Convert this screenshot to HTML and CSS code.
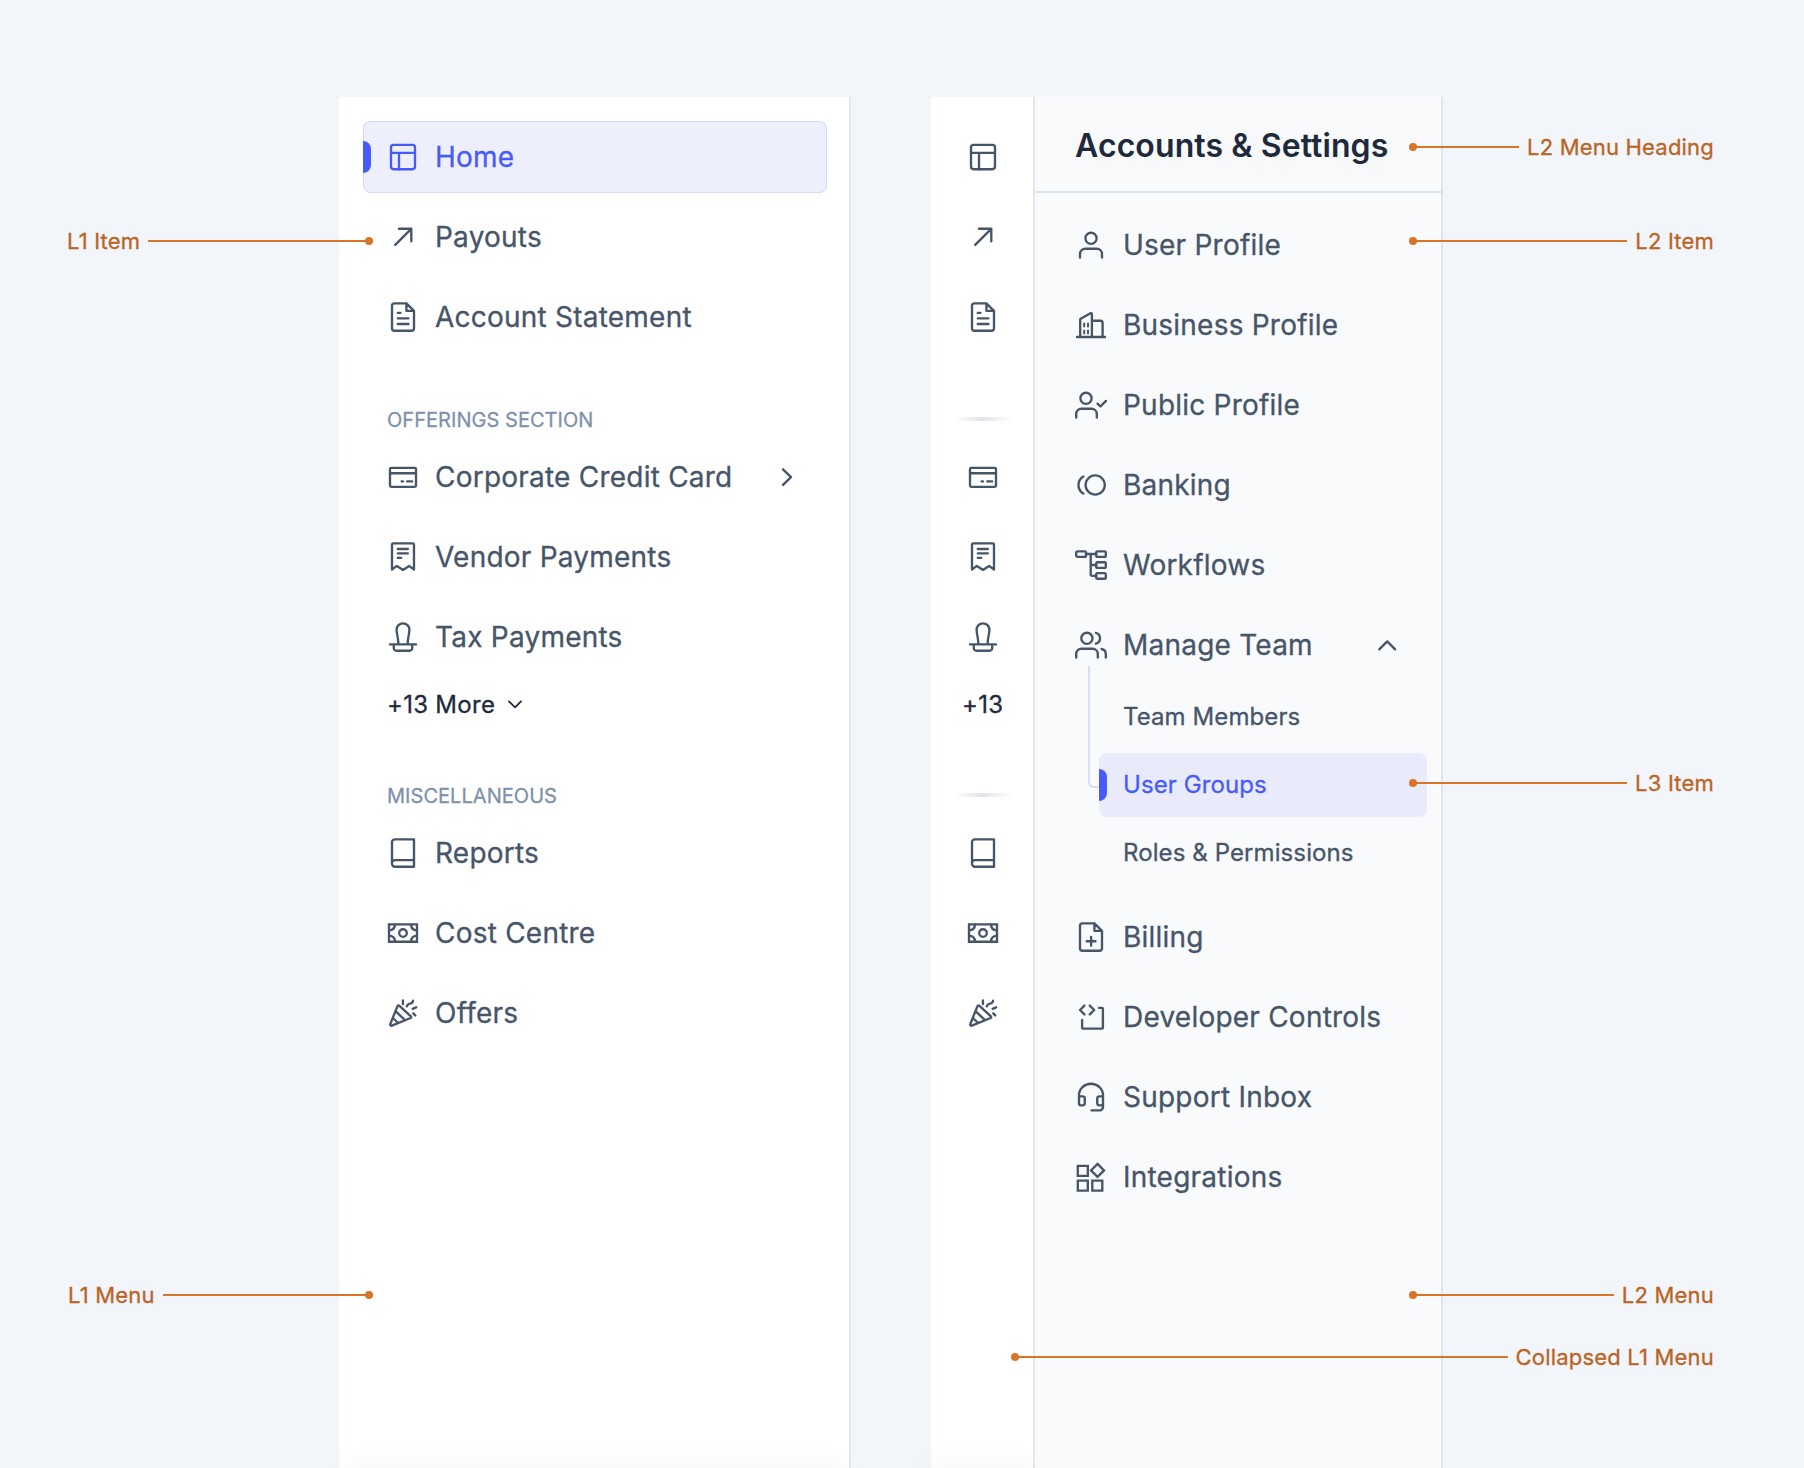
FILE: index.html
```html
<!DOCTYPE html>
<html lang="en">
<head>
<meta charset="utf-8">
<title>Navigation menu anatomy</title>
<link rel="stylesheet" href="styles.css">
</head>
<body>
<svg class="sprite" aria-hidden="true">
  <symbol id="home" viewBox="0 0 32 32"><rect x="4" y="3.8" width="24" height="24.4" rx="2.6"/><path d="M4 11.8h24M12 11.8v16.4"/></symbol>
  <symbol id="arrow" viewBox="0 0 32 32"><path d="M8.2 23.8 24.2 7.8M12 7.7h12.3v12.5"/></symbol>
  <symbol id="file" viewBox="0 0 32 32"><path d="M19.4 2.3H7.5A2.5 2.5 0 0 0 5 4.8v22.4a2.5 2.5 0 0 0 2.5 2.5h17a2.5 2.5 0 0 0 2.5-2.5V9.8L19.4 2.3v7.5H27M10.8 11.8h2.6M10.8 17.3h10.6M10.8 23h10.6"/></symbol>
  <symbol id="card" viewBox="0 0 32 32"><rect x="3" y="6.8" width="26" height="19" rx="1.2"/><path d="M3 12.2h26M14.7 20.4h1.2M20.3 20.4h4.8"/></symbol>
  <symbol id="receipt" viewBox="0 0 32 32"><path d="M5 28.5V3.7a1.4 1.4 0 0 1 1.4-1.4h19.2A1.4 1.4 0 0 1 27 3.7v24.8l-4.9-3.6-6.1 4-6.1-4zM10.8 8h10M10.8 12.3h10M10.8 16.8h3.4"/></symbol>
  <symbol id="stamp" viewBox="0 0 32 32"><path d="M3 23.4h26M6.8 23.4v3.8a2.5 2.5 0 0 0 2.5 2.5h13.4a2.5 2.5 0 0 0 2.5-2.5v-3.8M11.4 23.2C11.4 17 9.6 13 9.6 8.7a6.4 6.4 0 0 1 12.8 0c0 4.3-1.8 8.3-1.8 14.5"/></symbol>
  <symbol id="book" viewBox="0 0 32 32"><path d="M27 2.3H8a3 3 0 0 0-3 3v21.4a3 3 0 0 0 3 3h19zM5 26a3 3 0 0 1 3-2.9h19"/></symbol>
  <symbol id="cash" viewBox="0 0 32 32"><path stroke-linejoin="miter" d="M2 7.3h28v17.4H2z"/><circle cx="16" cy="16" r="3.8"/><path d="M8 7.6c-.2 3.2-2.3 5.4-5.7 5.7M24 7.6c.2 3.2 2.3 5.4 5.7 5.7M8 24.4c-.2-3.2-2.3-5.4-5.7-5.7M24 24.4c.2-3.2 2.3-5.4 5.7-5.7"/></symbol>
  <symbol id="party" viewBox="0 0 32 32"><path d="M10.6 8.9 3.3 27a1.2 1.2 0 0 0 1.6 1.6L23.6 21a1 1 0 0 0 .3-1.6L12.2 8.6a1 1 0 0 0-1.6.3zM8.6 14.2l9.4 9M5.8 21l5.4 5M15.9 3.5V7M19.8 9.4c.7-2.3 1.8-2.6 3.2-2.8 1.8-.2 2.9-.8 3-2.9M25.6 11.8l3.6-1.5M26.3 16.4l1.9 2"/></symbol>
  <symbol id="user" viewBox="0 0 32 32"><circle cx="16" cy="9.3" r="5.6"/><path d="M5 28.5v-3.6a5.2 5.2 0 0 1 5.2-5.2h11.6a5.2 5.2 0 0 1 5.2 5.2v3.6"/></symbol>
  <symbol id="building" viewBox="0 0 32 32"><path d="M2 28h28M5.2 28V10.6a1 1 0 0 1 .5-.9l9.7-5.5a1 1 0 0 1 1.5.9V28M16.9 11.7h8.4a2.3 2.3 0 0 1 2.3 2.3v14"/><path stroke-linecap="butt" stroke-width="2" d="M9.2 13.8v4.4M13 13.8v4.4M9.2 20.8v4.4M13 20.8v4.4"/></symbol>
  <symbol id="user-check" viewBox="0 0 32 32"><circle cx="11" cy="9.3" r="5.6"/><path d="M1.2 28.5v-3.6a5.2 5.2 0 0 1 5.2-5.2h10.2a5.2 5.2 0 0 1 5.2 5.2v3.6M22.6 14.7l2.8 2.8 5.6-5.6"/></symbol>
  <symbol id="coins" viewBox="0 0 32 32"><circle cx="20.2" cy="16" r="9.6"/><path d="M8.4 7.4a10 10 0 0 0 0 17.2"/></symbol>
  <symbol id="tree" viewBox="0 0 32 32"><rect x="1.2" y="2.3" width="9.8" height="5.6" rx="1.4"/><rect x="21.2" y="2.3" width="9.6" height="5.6" rx="1.4"/><rect x="21.2" y="13.2" width="9.6" height="5.6" rx="1.4"/><rect x="21.2" y="24.1" width="9.6" height="5.6" rx="1.4"/><path d="M11 5h10.2M15.7 5v20.5a1.4 1.4 0 0 0 1.4 1.4h4.1M15.7 16h5.5"/></symbol>
  <symbol id="users" viewBox="0 0 32 32"><circle cx="11.9" cy="9.3" r="5.6"/><path d="M1.2 28.5v-3.6a5.2 5.2 0 0 1 5.2-5.2h11.2a5.2 5.2 0 0 1 5.2 5.2v3.6M20.9 3.9a5.6 5.6 0 0 1 0 10.8M26.6 20a5.2 5.2 0 0 1 4.2 5v3.5"/></symbol>
  <symbol id="file-plus" viewBox="0 0 32 32"><path d="M19.4 2.3H7.5A2.5 2.5 0 0 0 5 4.8v22.4a2.5 2.5 0 0 0 2.5 2.5h17a2.5 2.5 0 0 0 2.5-2.5V9.8L19.4 2.3v7.5H27M11.7 20.2h8.8M16.1 15.8v8.8"/></symbol>
  <symbol id="code" viewBox="0 0 32 32"><path d="M9.4 4.6 5 9l4.4 4.4M14.8 4.6 19.2 9l-4.4 4.4M24 6.8h3a.9.9 0 0 1 .9.9v19a.9.9 0 0 1-.9.9H8a.9.9 0 0 1-.9-.9V19"/></symbol>
  <symbol id="headset" viewBox="0 0 32 32"><path d="M4 16.3v-2.2a12 11.4 0 0 1 24 0v12a3.2 3.2 0 0 1-3.2 3.2h-8.3M4 15.3h3.6a2.2 2.2 0 0 1 2.2 2.2v4.6a2.2 2.2 0 0 1-2.2 2.2H6a2 2 0 0 1-2-2zM28 15.3h-3.6a2.2 2.2 0 0 0-2.2 2.2v4.6a2.2 2.2 0 0 0 2.2 2.2H26a2 2 0 0 0 2-2z"/></symbol>
  <symbol id="grid" viewBox="0 0 32 32"><path stroke-linejoin="miter" d="M2.8 4.8h10v10h-10zM2.8 19.6h10v10h-10zM17.3 19.6h10v10h-10zM22.5 2.9 29 9.4l-6.5 6.5L16 9.4z"/></symbol>
  <symbol id="chevron-right" viewBox="0 0 32 32"><path d="M12 8.3 20 16.1 12 23.9"/></symbol>
  <symbol id="chevron-up" viewBox="0 0 32 32"><path d="M8.3 20.3 16.2 12.4l7.9 7.9"/></symbol>
  <symbol id="chevron-down" viewBox="0 0 16 16"><path d="M2 5.4l6 6 6-6"/></symbol>
</svg>

<main class="stage">
  <nav class="menu">
    <a class="item active"><svg class="icon"><use href="#home"/></svg>Home</a>
    <a class="item"><svg class="icon"><use href="#arrow"/></svg>Payouts</a>
    <a class="item"><svg class="icon"><use href="#file"/></svg>Account Statement</a>
    <h2 class="label first">OFFERINGS SECTION</h2>
    <a class="item"><svg class="icon"><use href="#card"/></svg>Corporate Credit Card<svg class="icon end"><use href="#chevron-right"/></svg></a>
    <a class="item"><svg class="icon"><use href="#receipt"/></svg>Vendor Payments</a>
    <a class="item"><svg class="icon"><use href="#stamp"/></svg>Tax Payments</a>
    <a class="more">+13 More<svg class="icon small"><use href="#chevron-down"/></svg></a>
    <h2 class="label">MISCELLANEOUS</h2>
    <a class="item"><svg class="icon"><use href="#book"/></svg>Reports</a>
    <a class="item"><svg class="icon"><use href="#cash"/></svg>Cost Centre</a>
    <a class="item"><svg class="icon"><use href="#party"/></svg>Offers</a>
    <div class="footer"></div>
  </nav>

  <div class="split">
    <nav class="rail">
      <a class="item"><svg class="icon"><use href="#home"/></svg></a>
      <a class="item"><svg class="icon"><use href="#arrow"/></svg></a>
      <a class="item"><svg class="icon"><use href="#file"/></svg></a>
      <div class="divider first"></div>
      <a class="item"><svg class="icon"><use href="#card"/></svg></a>
      <a class="item"><svg class="icon"><use href="#receipt"/></svg></a>
      <a class="item"><svg class="icon"><use href="#stamp"/></svg></a>
      <a class="more">+13</a>
      <div class="divider"></div>
      <a class="item"><svg class="icon"><use href="#book"/></svg></a>
      <a class="item"><svg class="icon"><use href="#cash"/></svg></a>
      <a class="item"><svg class="icon"><use href="#party"/></svg></a>
      <div class="footer"></div>
    </nav>
    <section class="submenu">
      <h1 class="heading">Accounts &amp; Settings</h1>
      <nav class="list">
        <a class="item"><svg class="icon"><use href="#user"/></svg>User Profile</a>
        <a class="item"><svg class="icon"><use href="#building"/></svg>Business Profile</a>
        <a class="item"><svg class="icon"><use href="#user-check"/></svg>Public Profile</a>
        <a class="item"><svg class="icon"><use href="#coins"/></svg>Banking</a>
        <a class="item"><svg class="icon"><use href="#tree"/></svg>Workflows</a>
        <a class="item"><svg class="icon"><use href="#users"/></svg>Manage Team<svg class="icon end"><use href="#chevron-up"/></svg></a>
        <div class="children">
          <a class="child">Team Members</a>
          <a class="child active">User Groups</a>
          <a class="child">Roles &amp; Permissions</a>
        </div>
        <a class="item"><svg class="icon"><use href="#file-plus"/></svg>Billing</a>
        <a class="item"><svg class="icon"><use href="#code"/></svg>Developer Controls</a>
        <a class="item"><svg class="icon"><use href="#headset"/></svg>Support Inbox</a>
        <a class="item"><svg class="icon"><use href="#grid"/></svg>Integrations</a>
      </nav>
    </section>
  </div>

  <div class="callout left l1-item"><span>L1 Item</span><i></i></div>
  <div class="callout left l1-menu"><span>L1 Menu</span><i></i></div>
  <div class="callout right l2-heading"><i></i><span>L2 Menu Heading</span></div>
  <div class="callout right l2-item"><i></i><span>L2 Item</span></div>
  <div class="callout right l3-item"><i></i><span>L3 Item</span></div>
  <div class="callout right l2-menu"><i></i><span>L2 Menu</span></div>
  <div class="callout right l1-rail"><i></i><span>Collapsed L1 Menu</span></div>
</main>
</body>
</html>
```
FILE: styles.css
```css
* {
  box-sizing: border-box;
}

body {
  margin: 0;
  font-family: Inter, "Liberation Sans", sans-serif;
  font-weight: 400;
  color: #475569;
  background: #f2f5fa;
  /* A touch heavier than Inter Regular */
  -webkit-text-stroke: 0.3px currentColor;
}

.sprite {
  display: none;
}

.stage {
  position: relative;
  display: flex;
  gap: 80px;
  height: 1468px;
  padding: 97px 0 0 339px;
  overflow: hidden;
}

/* Shared pieces */

.icon {
  flex: none;
  width: 32px;
  height: 32px;
  overflow: visible;
  fill: none;
  stroke: currentColor;
  stroke-width: 2.35;
  stroke-linecap: round;
  stroke-linejoin: round;
}

.icon.end {
  margin-left: auto;
}

.icon.small {
  width: 16px;
  height: 16px;
  stroke-width: 1.8;
}

.item {
  position: relative;
  display: flex;
  flex: none;
  align-items: center;
  gap: 16px;
  height: 72px;
  padding: 0 24px;
  font-size: 28px;
  letter-spacing: 0.008em;
  border-radius: 8px;
  white-space: nowrap;
}

.item + .item {
  margin-top: 8px;
}

.item.active {
  color: #475bfb;
  background: #eeeffd;
  box-shadow: inset 0 0 0 1px #d3d8fd;
}

.item.active::before,
.child.active::before {
  content: "";
  position: absolute;
  top: 50%;
  left: 0;
  width: 8px;
  height: 32px;
  margin-top: -16px;
  background: #475bfb;
  border-radius: 0 8px 8px 0;
}

.more {
  display: flex;
  flex: none;
  align-items: center;
  gap: 12px;
  height: 62px;
  padding-left: 24px;
  font-size: 24px;
  letter-spacing: 0.012em;
  color: #1e293b;
}

.footer {
  flex: none;
  height: 96px;
  margin: auto 0 -96px;
  box-shadow: 0 0 30px rgba(40, 50, 50, 0.06);
}

/* L1 menu */

.menu {
  display: flex;
  flex-direction: column;
  width: 512px;
  padding: 24px 22px 0 24px;
  background: #fff;
  border-right: 2px solid #e2e6ed;
}

.menu .footer {
  margin-left: -14px;
  margin-right: -14px;
}

.label {
  display: flex;
  flex: none;
  align-items: center;
  height: 42px;
  margin: 40px 0 0;
  padding-left: 24px;
  font-size: 20px;
  font-weight: 400;
  letter-spacing: 0.002em;
  color: #8091ab;
}

.label.first {
  margin-top: 46px;
}

/* Collapsed L1 menu */

.split {
  display: flex;
}

.rail {
  display: flex;
  flex-direction: column;
  width: 104px;
  padding-top: 24px;
  background: #fff;
  border-right: 2px solid #e2e6ed;
}

.rail .item {
  padding: 0 0 0 36px;
}

.rail .more {
  padding-left: 31px;
}

.rail .divider {
  flex: none;
  width: 60px;
  height: 4px;
  margin: 58px 0 20px 22px;
  background: linear-gradient(90deg, rgba(223, 227, 233, 0), #e0e4ea, rgba(223, 227, 233, 0));
}

.rail .divider.first {
  margin-top: 64px;
}

/* L2 menu */

.submenu {
  width: 408px;
  background: #f9fafc;
  border-right: 2px solid #dfe4ec;
}

.heading {
  display: flex;
  align-items: center;
  height: 96px;
  margin: 0 -2px 0 0;
  padding: 3px 0 0 40px;
  font-size: 32px;
  font-weight: 600;
  letter-spacing: 0.003em;
  color: #1e293b;
  white-space: nowrap;
  text-shadow: 0 8px 40px rgba(30, 41, 59, 0.08);
  border-bottom: 2px solid #dbe2ea;
  -webkit-text-stroke: 0;
}

.list {
  padding: 16px 14px 0 16px;
}

.children {
  position: relative;
  display: flex;
  flex-direction: column;
  gap: 4px;
  margin: 4px 0 16px 48px;
}

/* Elbow that ties the open group to its selected child */
.children::before {
  content: "";
  position: absolute;
  top: -19px;
  left: -11px;
  width: 11px;
  height: 120px;
  border: solid #d9dcfb;
  border-width: 0 0 2px 2px;
  border-radius: 0 0 0 6px;
}

.child {
  position: relative;
  display: flex;
  align-items: center;
  height: 64px;
  padding: 0 0 2px 24px;
  font-size: 24px;
  letter-spacing: 0.004em;
  border-radius: 8px;
}

.child.active {
  color: #475bfb;
  background: #e9eafa;
}

/* Callouts laid over the menus */

.callout {
  position: absolute;
  display: flex;
  align-items: center;
  gap: 8px;
  height: 28px;
  font-size: 22px;
  line-height: 28px;
  letter-spacing: 0.009em;
  color: #ba6424;
  white-space: nowrap;
}

.callout i {
  position: relative;
  flex: 1;
  height: 2px;
  background: #d97429;
}

.callout i::after {
  content: "";
  position: absolute;
  top: -3px;
  width: 8px;
  height: 8px;
  border-radius: 50%;
  background: #d97429;
}

.callout.left {
  right: 1435px;
}

.callout.left i::after {
  right: -4px;
}

.callout.right {
  left: 1413px;
  right: 90px;
}

.callout.right i::after {
  left: -4px;
}

.callout.l1-item {
  top: 227px;
  left: 67px;
}

.callout.l1-menu {
  top: 1281px;
  left: 68px;
}

.callout.l2-heading {
  top: 133px;
}

.callout.l2-item {
  top: 227px;
}

.callout.l3-item {
  top: 769px;
}

.callout.l2-menu {
  top: 1281px;
}

.callout.l1-rail {
  top: 1343px;
  left: 1015px;
}
```
